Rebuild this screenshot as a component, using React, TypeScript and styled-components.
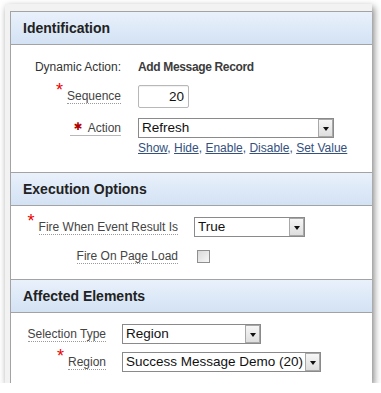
import styled, { createGlobalStyle } from "styled-components";

const GlobalStyle = createGlobalStyle`
  html, body {
    margin: 0;
    padding: 0;
    background: #fff;
  }
  body {
    font-family: "Liberation Sans", Arial, sans-serif;
    font-size: 12px;
    color: #333;
  }
`;

const Frame = styled.div`
  box-sizing: border-box;
  width: 367px;
  height: 379px;
  margin: 4px 0 0 5px;
  padding: 7px 0 0 5px;
  background: #f2f2f2;
  box-shadow: 2px 3px 7px rgba(0, 0, 0, 0.5);
  display: flex;
`;

const Panel = styled.div`
  flex: 1;
  display: flex;
  flex-direction: column;
  background: #fff;
  border-top: 1px solid #a3a3a3;
  border-left: 1px solid #a3a3a3;
`;

const Section = styled.section`
  border-top: 1px solid #a3a3a3;
  &:first-child {
    border-top: none;
  }
`;

const Header = styled.h2`
  margin: 0;
  height: 32px;
  padding-left: 12px;
  display: flex;
  align-items: center;
  font-size: 14px;
  font-weight: bold;
  color: #222;
  background: linear-gradient(#e9f1fb, #d3e2f4);
  border-bottom: 1px solid #a3a3a3;
`;

const Body = styled.div<{ $top: number; $bottom: number }>`
  padding: ${(p) => p.$top}px 0 ${(p) => p.$bottom}px;
`;

const Row = styled.div<{ $label: number; $gap: number; $mt?: number }>`
  display: grid;
  grid-template-columns: ${(p) => p.$label}px auto;
  column-gap: ${(p) => p.$gap}px;
  align-items: center;
  margin-top: ${(p) => p.$mt ?? 0}px;
`;

const LabelCell = styled.div`
  justify-self: end;
  display: flex;
  align-items: flex-start;
`;

const Plain = styled.span`
  line-height: 16px;
  color: #333;
`;

const Label = styled.span`
  display: inline-block;
  line-height: 14px;
  color: #444;
  border-bottom: 1px dotted #9a9a9a;
`;

const HelpLabel = styled.span`
  display: inline-flex;
  align-items: center;
  padding-left: 4px;
  line-height: 14px;
  color: #444;
  border-bottom: 1px solid #b8b8b8;
`;

const Star = styled.span`
  display: inline-block;
  height: 10px;
  margin: -4px 4px 0 0;
  font-size: 18px;
  line-height: 10px;
  color: #ee0000;
`;

const HeavyStar = styled.span`
  margin: -4px 5px 0 0;
  font-family: "DejaVu Sans", sans-serif;
  font-size: 10.5px;
  color: #b00000;
`;

const Value = styled.span`
  font-weight: bold;
  line-height: 16px;
  letter-spacing: -0.35px;
  color: #3c3c3c;
`;

const TextInput = styled.div`
  box-sizing: border-box;
  width: 51px;
  height: 23px;
  padding-right: 4px;
  display: flex;
  align-items: center;
  justify-content: flex-end;
  font-size: 13.5px;
  color: #111;
  border: 1px solid #b8b8b8;
  border-radius: 2px;
  box-shadow: inset 0 1px 1px rgba(0, 0, 0, 0.06);
`;

const SelectBox = styled.div<{ $w: number }>`
  box-sizing: border-box;
  width: ${(p) => p.$w}px;
  height: 20px;
  display: flex;
  align-items: stretch;
  border: 1px solid #8a8a8a;
  background: #fff;
`;

const SelectText = styled.span`
  flex: 1;
  padding-left: 3px;
  font-size: 13.5px;
  line-height: 18px;
  color: #111;
  white-space: nowrap;
  overflow: hidden;
`;

const DropButton = styled.span`
  box-sizing: border-box;
  width: 15px;
  display: flex;
  align-items: center;
  justify-content: center;
  border: 1px solid #a8a8a8;
  background: linear-gradient(#f6f6f6, #dedede);
  &::after {
    content: "";
    border-left: 3.5px solid transparent;
    border-right: 3.5px solid transparent;
    border-top: 4px solid #111;
    margin-top: 1px;
  }
`;

const Checkbox = styled.span`
  box-sizing: border-box;
  width: 13px;
  height: 13px;
  margin-left: 3px;
  border: 1px solid #8f8f8f;
  background: linear-gradient(135deg, #d9d9d9, #f7f7f7);
`;

const CheckCell = styled.div`
  height: 20px;
  display: flex;
  align-items: center;
`;

const Links = styled.div`
  grid-column: 2;
  line-height: 14px;
  color: #34507e;
`;

const Link = styled.a`
  color: #34507e;
  text-decoration: underline;
  cursor: pointer;
`;

function Select({ width, value }: { width: number; value: string }) {
  return (
    <SelectBox $w={width}>
      <SelectText>{value}</SelectText>
      <DropButton />
    </SelectBox>
  );
}

const actions = ["Show", "Hide", "Enable", "Disable", "Set Value"];

export default function App() {
  return (
    <>
      <GlobalStyle />
      <Frame>
        <Panel>
          <Section>
            <Header>Identification</Header>
            <Body $top={14} $bottom={17}>
              <Row $label={110} $gap={17}>
                <LabelCell>
                  <Plain>Dynamic Action:</Plain>
                </LabelCell>
                <Value>Add Message Record</Value>
              </Row>
              <Row $label={110} $gap={17} $mt={10}>
                <LabelCell>
                  <Star>*</Star>
                  <Label>Sequence</Label>
                </LabelCell>
                <TextInput>20</TextInput>
              </Row>
              <Row $label={110} $gap={17} $mt={10}>
                <LabelCell>
                  <HelpLabel>
                    <HeavyStar>✱</HeavyStar>
                    Action
                  </HelpLabel>
                </LabelCell>
                <Select width={196} value="Refresh" />
              </Row>
              <Row $label={110} $gap={17} $mt={3}>
                <Links>
                  {actions.map((a, i) => (
                    <span key={a}>
                      <Link>{a}</Link>
                      {i < actions.length - 1 ? ", " : ""}
                    </span>
                  ))}
                </Links>
              </Row>
            </Body>
          </Section>

          <Section>
            <Header>Execution Options</Header>
            <Body $top={11} $bottom={13}>
              <Row $label={167} $gap={16}>
                <LabelCell>
                  <Star>*</Star>
                  <Label>Fire When Event Result Is</Label>
                </LabelCell>
                <Select width={111} value="True" />
              </Row>
              <Row $label={167} $gap={16} $mt={9}>
                <LabelCell>
                  <Label>Fire On Page Load</Label>
                </LabelCell>
                <CheckCell>
                  <Checkbox />
                </CheckCell>
              </Row>
            </Body>
          </Section>

          <Section>
            <Header>Affected Elements</Header>
            <Body $top={11} $bottom={11}>
              <Row $label={95} $gap={16}>
                <LabelCell>
                  <Label>Selection Type</Label>
                </LabelCell>
                <Select width={139} value="Region" />
              </Row>
              <Row $label={95} $gap={16} $mt={8}>
                <LabelCell>
                  <Star>*</Star>
                  <Label>Region</Label>
                </LabelCell>
                <Select width={199} value="Success Message Demo (20)" />
              </Row>
            </Body>
          </Section>
        </Panel>
      </Frame>
    </>
  );
}
